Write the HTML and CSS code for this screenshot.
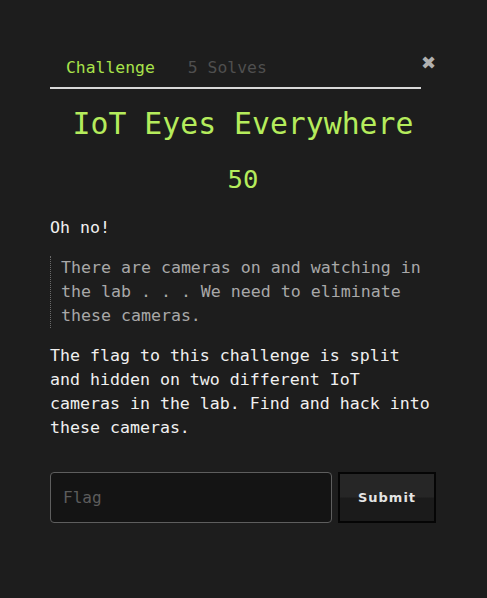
FILE: index.html
```html
<!DOCTYPE html>
<html>
<head>
<meta charset="utf-8">
<link rel="stylesheet" href="styles.css">
</head>
<body>
<div class="modal">
  <div class="header">
    <nav class="tabs">
      <span class="tab active">Challenge</span>
      <span class="tab">5 Solves</span>
    </nav>
    <span class="close">&#10006;</span>
  </div>
  <h1 class="title">IoT Eyes Everywhere</h1>
  <div class="value">50</div>
  <p class="text first">Oh no!</p>
  <blockquote class="quote">There are cameras on and watching in the lab . . . We need to eliminate these cameras.</blockquote>
  <p class="text">The flag to this challenge is split and hidden on two different IoT cameras in the lab. Find and hack into these cameras.</p>
  <form class="submit-row">
    <input class="flag" type="text" placeholder="Flag">
    <button class="btn" type="button">Submit</button>
  </form>
</div>
</body>
</html>
```

FILE: styles.css
```css
html, body {
  margin: 0;
  padding: 0;
  background: #1d1d1d;
  height: 100%;
}
body {
  font-family: "DejaVu Sans Mono", "Liberation Mono", monospace;
  color: #ececec;
}
.modal {
  width: 386px;
  padding: 46px 0 0 50px;
}
.header {
  display: flex;
  align-items: flex-start;
}
.tabs {
  width: 372px;
  display: flex;
  gap: 33px;
  padding: 12px 0 9px 16px;
  box-sizing: border-box;
  border-bottom: 2px solid #d8d8d8;
}
.tab {
  font-size: 16.4px;
  line-height: 20px;
  color: #4f4f4f;
}
.tab.active {
  color: #a9e34b;
}
.close {
  margin: 7px 0 0 0;
  color: #b0b0b0;
  font-family: "DejaVu Sans", sans-serif;
  font-size: 18px;
  font-weight: bold;
  line-height: 20px;
}
.title {
  margin: 17px 0 0 0;
  text-align: center;
  font-weight: normal;
  font-size: 29.8px;
  line-height: 36px;
  color: #b5ec5c;
}
.value {
  margin-top: 21px;
  text-align: center;
  font-size: 25.6px;
  line-height: 32px;
  color: #b5ec5c;
}
.text {
  margin: 0;
  font-size: 16.6px;
  line-height: 24px;
  color: #f0f0f0;
}
.text.first {
  margin-top: 21px;
}
.quote {
  margin: 16px 0 16px 0;
  padding: 0 0 0 10px;
  border-left: 1px dotted #6a6a6a;
  font-size: 16.6px;
  line-height: 24px;
  color: #a8a8a8;
}
.submit-row {
  margin-top: 32px;
  display: flex;
  gap: 6px;
}
.flag {
  width: 282px;
  height: 51px;
  box-sizing: border-box;
  border: 1px solid #5e5e5e;
  border-radius: 4px;
  background: #141414;
  padding: 0 12px;
  font-family: "DejaVu Sans Mono", monospace;
  font-size: 16px;
  color: #ddd;
  outline: none;
}
.flag::placeholder {
  color: #5c5c5c;
}
.btn {
  width: 98px;
  height: 51px;
  box-sizing: border-box;
  border: 2px solid #050505;
  background: linear-gradient(#262626 0%, #262626 48%, #1b1b1b 52%, #1b1b1b 100%);
  color: #e4e4e4;
  font-family: "DejaVu Sans", "Liberation Sans", sans-serif;
  font-weight: bold;
  font-size: 13px;
  letter-spacing: 1px;
}
```
